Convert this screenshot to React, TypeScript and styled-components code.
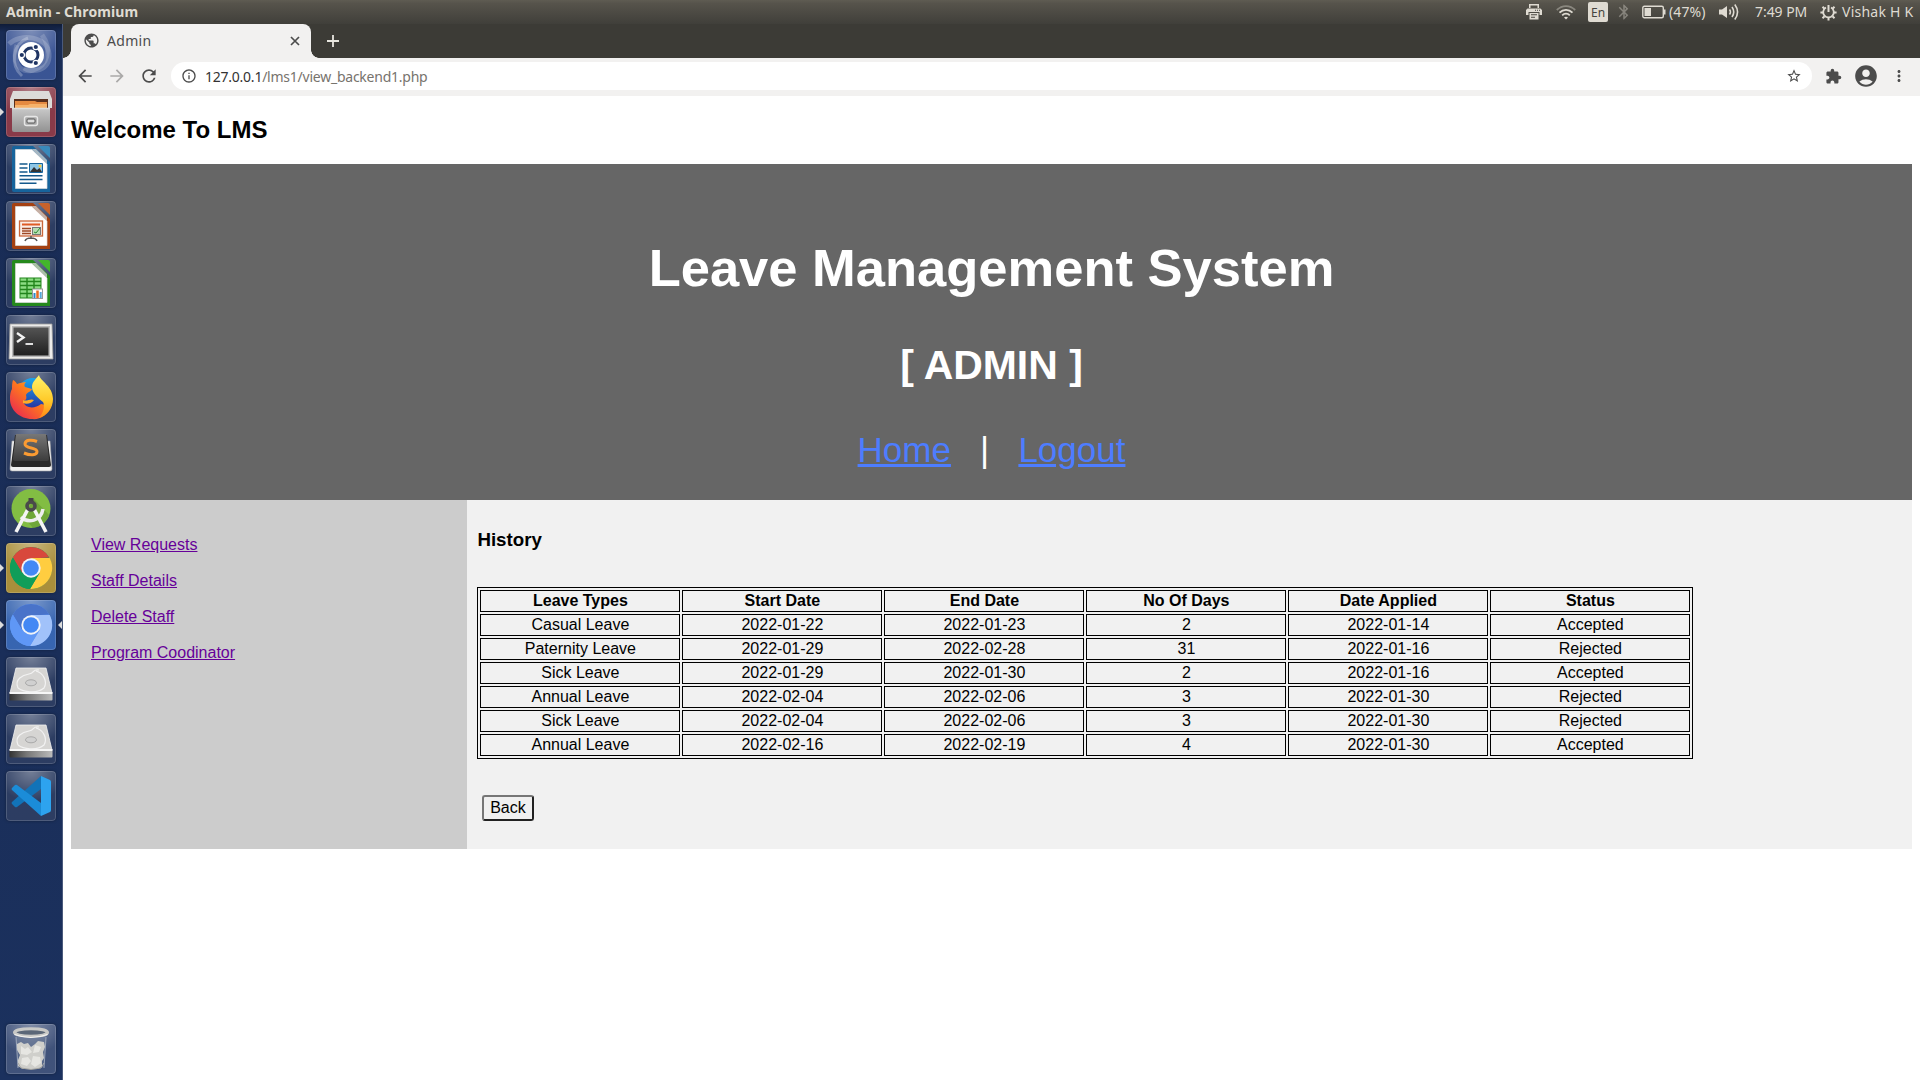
import React from "react";
import styled, { createGlobalStyle } from "styled-components";
import {
  MdPublic, MdArrowBack, MdArrowForward, MdRefresh, MdInfoOutline, MdStarBorder,
  MdExtension, MdAccountCircle, MdMoreVert, MdBluetooth,
} from "react-icons/md";

const Global = createGlobalStyle`
  html, body { margin: 0; padding: 0; background: #fff; }
  body { font-family: "Liberation Sans", Arial, sans-serif; font-size: 16px; color: #000; overflow: hidden; }
`;

const uiFont = `"Noto Sans", "Open Sans", sans-serif`;

const Desktop = styled.div`
  display: flex;
  flex-direction: column;
  width: 1920px;
  height: 1080px;
`;

/* ---------- Top panel ---------- */
const Panel = styled.header`
  display: flex;
  align-items: center;
  justify-content: space-between;
  height: 24px;
  flex: none;
  padding: 0 4px 0 6px;
  background: linear-gradient(#5f5c52 0, #56534b 15%, #403f3a 100%);
  color: #dfdbd2;
  font-family: ${uiFont};
  font-size: 14.5px;
  line-height: 24px;
  box-sizing: border-box;
`;
const PanelTitle = styled.div`
  font-weight: 700;
  font-size: 14px;
  letter-spacing: 0.1px;
`;
const Tray = styled.div`
  display: flex;
  align-items: center;
  height: 24px;
`;
const TrayItem = styled.div<{ $gap: number; $dim?: boolean }>`
  display: flex;
  align-items: center;
  margin-left: ${(p) => p.$gap}px;
  opacity: ${(p) => (p.$dim ? 0.4 : 1)};
  white-space: nowrap;
`;
const TrayText = styled.span<{ $w: number; $ls?: number }>`
  width: ${(p) => p.$w}px;
  font-size: 14px;
  letter-spacing: ${(p) => p.$ls ?? 0}px;
  white-space: nowrap;
`;
const Keyboard = styled.span`
  width: 20px;
  height: 20px;
  border-radius: 2px;
  background: #dfdbd2;
  color: #45433e;
  font-size: 12px;
  line-height: 21px;
  text-align: center;
`;

const Main = styled.div`
  display: flex;
  flex: 1;
  min-height: 0;
`;

/* ---------- Launcher ---------- */
const Launcher = styled.nav`
  display: flex;
  flex-direction: column;
  gap: 7px;
  width: 63px;
  flex: none;
  box-sizing: border-box;
  padding: 6px 6px 6px;
  border-right: 1px solid #4a5a7c;
  background: linear-gradient(#0f1c38 0, #192c55 8px, #1a2e59 60%, #1b315e 100%);
`;
const Tile = styled.div<{ $bg: string; $last?: boolean }>`
  position: relative;
  width: 50px;
  height: 50px;
  flex: none;
  box-sizing: border-box;
  border-radius: 4px;
  background: radial-gradient(ellipse 70% 60% at 50% 0, rgba(255, 255, 255, 0.36), rgba(255, 255, 255, 0.03)), ${(p) => p.$bg};
  box-shadow: inset 0 0 0 1px rgba(255, 255, 255, 0.16), 0 0 3px rgba(0, 0, 0, 0.35);
  margin-top: ${(p) => (p.$last ? "auto" : "0")};
  svg { display: block; }
`;
const Running = styled.i<{ $side: "left" | "right" }>`
  position: absolute;
  top: 21px;
  ${(p) => (p.$side === "left" ? "left: -6px;" : "right: -6px;")}
  width: 0;
  height: 0;
  border: 4px solid transparent;
  border-${(p) => p.$side}-color: #dcdcdc;
  border-${(p) => (p.$side === "left" ? "right" : "left")}-width: 0;
`;

/* ---------- Browser ---------- */
const Browser = styled.div`
  display: flex;
  flex-direction: column;
  flex: 1;
  min-width: 0;
`;
const TabStrip = styled.div`
  display: flex;
  align-items: stretch;
  height: 34px;
  padding-left: 8px;
  background: #3c3b36;
  font-family: ${uiFont};
`;
const Tab = styled.div`
  position: relative;
  display: flex;
  align-items: center;
  width: 240px;
  box-sizing: border-box;
  padding: 0 11px 1px 12px;
  border-radius: 8px 8px 0 0;
  background: #f2f1f0;
  color: #4c4c4c;
  font-size: 14px;
  &::before, &::after {
    content: "";
    position: absolute;
    bottom: 0;
    width: 8px;
    height: 8px;
  }
  &::before { left: -8px; background: radial-gradient(circle at 0 0, transparent 7.5px, #f2f1f0 8px); }
  &::after { right: -8px; background: radial-gradient(circle at 100% 0, transparent 7.5px, #f2f1f0 8px); }
`;
const TabTitle = styled.span`
  flex: 1;
  margin-left: 7px;
  letter-spacing: 0.3px;
`;
const NewTab = styled.div`
  display: flex;
  align-items: center;
  margin-left: 16px;
  color: #e8e6df;
`;
const Toolbar = styled.div`
  display: flex;
  align-items: center;
  height: 38px;
  box-sizing: border-box;
  padding: 0 12px 2px 12px;
  background: #f2f1f0;
  color: #4c4c4c;
  font-family: ${uiFont};
`;
const NavIcon = styled.span<{ $dim?: boolean }>`
  display: flex;
  width: 20px;
  margin-right: 12px;
  color: ${(p) => (p.$dim ? "#aaa9a8" : "#4c4c4c")};
`;
const AddressBar = styled.div`
  display: flex;
  align-items: center;
  flex: 1;
  height: 28px;
  margin: 0 13px 0 0;
  padding: 0 10px;
  border-radius: 14px;
  background: #fff;
`;
const Url = styled.span`
  flex: 1;
  margin-left: 8px;
  color: #77736d;
  font-size: 14px;
  letter-spacing: -0.24px;
  b { color: #333; font-weight: 400; }
`;
const Actions = styled.div`
  display: flex;
  align-items: center;
  gap: 11px;
`;

/* ---------- Page ---------- */
const Page = styled.main`
  flex: 1;
  padding: 20px 8px 0;
  background: #fff;
`;
const Welcome = styled.h2`
  margin: 0 0 20px;
  font-size: 24px;
  line-height: 28px;
`;
const Banner = styled.section`
  display: flex;
  flex-direction: column;
  align-items: center;
  height: 336px;
  box-sizing: border-box;
  padding-top: 74px;
  background: #666;
  color: #fff;
  font-size: 35px;
`;
const BannerTitle = styled.h2`
  margin: 0;
  font-size: 52.5px;
  line-height: 60px;
`;
const BannerRole = styled.h3`
  margin: 44px 0 41px;
  font-size: 40.95px;
  line-height: 47px;
`;
const BannerLinks = styled.div`
  line-height: 40px;
  white-space: pre;
  a { color: #4d7dff; text-decoration: underline; }
`;
const Columns = styled.div`
  display: flex;
  height: 349px;
`;
const Side = styled.aside`
  display: flex;
  flex-direction: column;
  align-items: flex-start;
  gap: 18px;
  width: 396px;
  box-sizing: border-box;
  padding: 36px 20px;
  background: #ccc;
  a { color: #660099; line-height: 18px; text-decoration: underline; }
`;
const Article = styled.article`
  flex: 1;
  padding: 29px 10px 0 10.4px;
  background: #f1f1f1;
`;
const Heading = styled.h3`
  margin: 0 0 37px;
  font-size: 18.72px;
  line-height: 21px;
`;
const Table = styled.table`
  width: 1216px;
  table-layout: fixed;
  border: 1px solid #000;
  border-collapse: separate;
  border-spacing: 2px;
  th, td {
    height: 18px;
    padding: 1px;
    border: 1px solid #000;
    line-height: 18px;
    text-align: center;
  }
`;
const BackButton = styled.button`
  display: block;
  margin: 36px 0 0 4.8px;
  padding: 2px 6px;
  height: 26px;
  border: 2px solid;
  border-color: #767676 #212121 #212121 #767676;
  border-radius: 3px;
  background: #f0f0f0;
  color: #000;
  font: 16px/18px "Liberation Sans", Arial, sans-serif;
`;

/* ---------- Launcher drawings, each on a 50x50 canvas ---------- */
const Svg = ({ children }: { children: React.ReactNode }) => (
  <svg width="50" height="50" viewBox="0 0 50 50">{children}</svg>
);

const Dash = () => (
  <Svg>
    <g fill="none" stroke="#fff">
      <path d="M3 14C14 3 42 6 43 24S25 43 18 38" strokeWidth="5" opacity=".2" />
      <path d="M36 5C46 18 42 36 27 40S6 30 11 15" strokeWidth="5" opacity=".17" />
      <path d="M16 46C4 35 6 14 22 8" strokeWidth="3" opacity=".25" />
    </g>
    <circle cx="25" cy="25" r="13" fill="#fff" />
    <circle cx="25" cy="25" r="7" fill="none" stroke="#1f3463" strokeWidth="3" />
    <g stroke="#fff" strokeWidth="1.2" fill="#1f3463">
      <circle cx="15.8" cy="25" r="2.7" /><circle cx="29.8" cy="17" r="2.7" /><circle cx="29.8" cy="33" r="2.7" />
    </g>
  </Svg>
);

const Files = () => (
  <Svg>
    <defs>
      <linearGradient id="fg" x2="0" y2="1"><stop stopColor="#c9c9c9" /><stop offset="1" stopColor="#929292" /></linearGradient>
    </defs>
    <path d="M7 4h36l3 8v9H4v-9z" fill="#dcdbd9" />
    <path d="M8 12h34v10H8z" fill="#5a2f1d" />
    <path d="M9 14h20l2 1h10v7H9z" fill="#e58a42" />
    <path d="M9 18h13l2-1h17v5H9z" fill="#f6b26b" />
    <path d="M6 21h38v22q0 2-2 2H8q-2 0-2-2z" fill="url(#fg)" />
    <path d="M6 21.500h38" stroke="#dedede" strokeWidth="1.5" />
    <rect x="18.5" y="29.5" width="13" height="9" rx="2" fill="#aaa" stroke="#e6e6e6" strokeWidth="1.4" />
    <rect x="21" y="32" width="8" height="4" rx="1" fill="#ddd" stroke="#555" />
  </Svg>
);

const Doc = ({ color, light, children }: { color: string; light: string; children: React.ReactNode }) => (
  <Svg>
    <path d="M8 2h19l17 16v30H8a2 2 0 0 1-2-2V4a2 2 0 0 1 2-2z" fill={color} />
    <path d="M9.5 5.5H26L41 20v24.5H9.5z" fill="#fff" stroke="#ddd" strokeWidth=".7" />
    <path d="M26 5l15 15v-4L30 5z" fill="#ccc" opacity=".8" />
    <path d="M32 2h10a2 2 0 0 1 2 2v10z" fill={light} />
    {children}
  </Svg>
);

const Writer = () => (
  <Doc color="#17649c" light="#3989bb">
    <path d="M13.5 20h8M13.5 24h8M13.5 28h8M13.5 31.7h23M13.5 35.500h23M13.5 39.3h17" stroke="#14598c" strokeWidth="1.6" />
    <path d="M23.5 19.500h13v9h-13z" fill="#8ec6e6" stroke="#17649c" />
    <path d="M24 28l4-5 3 3 2.500-2 2.500 4z" fill="#333" /><circle cx="34" cy="22" r="1.5" fill="#f6c83c" />
  </Doc>
);
const Impress = () => (
  <Doc color="#a54112" light="#c7622b">
    <rect x="13.5" y="20" width="23" height="15" fill="#fbeee7" stroke="#c9673b" strokeWidth="1.3" />
    <path d="M16 23.5h18" stroke="#df5b24" strokeWidth="2" />
    <path d="M16 27.5h9M16 30h9M16 32.5h9" stroke="#9f4824" strokeWidth="1.5" />
    <rect x="26.5" y="26.5" width="8" height="7" fill="#b7ddb2" stroke="#777" /><path d="M28 31l2 1 4-5" fill="none" stroke="#2b8a32" />
    <path d="M25 35v3m-6 2q1-3 6-3t6 3" fill="none" stroke="#555" strokeWidth="1.5" />
  </Doc>
);
const Calc = () => (
  <Doc color="#25891c" light="#43b62c">
    <rect x="14" y="20" width="21" height="20" fill="#8cdc83" stroke="#22851c" />
    <path d="M14 23.5h21M14 27.5h21M14 31.5h21M14 35.5h21M21 20v20M28 20v20" stroke="#22851c" strokeWidth="1.4" />
    <rect x="26.5" y="31" width="10" height="9.5" fill="#fff" stroke="#999" />
    <path d="M28.5 40v-5" stroke="#2a8ac9" strokeWidth="2" /><path d="M31.5 40v-7.5" stroke="#e76a21" strokeWidth="2.5" /><path d="M34.7 40v-6" stroke="#55a8db" strokeWidth="2" />
  </Doc>
);
const Terminal = () => (
  <Svg>
    <defs><linearGradient id="tg" x2="0" y2="1"><stop stopColor="#545454" /><stop offset="1" stopColor="#202020" /></linearGradient></defs>
    <path d="M4 9h42l1 35H3z" fill="#ecebea" stroke="#9c9c9c" strokeWidth=".8" />
    <path d="M6 11h38v31H6z" fill="#b8b8b8" />
    <path d="M7.5 12.5h35v28h-35z" fill="url(#tg)" />
    <path d="M11 18l6.500 4.500-6.500 4.500" fill="none" stroke="#f3f3f3" strokeWidth="2.400" />
    <path d="M19.5 29h7.5" stroke="#f3f3f3" strokeWidth="1.8" />
  </Svg>
);
const Firefox = () => (
  <Svg>
    <defs>
      <linearGradient id="ff" x1="1" x2="0" y2="1"><stop stopColor="#ffcf2e" /><stop offset=".45" stopColor="#ff7b1c" /><stop offset="1" stopColor="#e5195c" /></linearGradient>
      <linearGradient id="fb" x2="0" y2="1"><stop stopColor="#19a6ee" /><stop offset="1" stopColor="#2a2d9c" /></linearGradient>
      <linearGradient id="fy" x2="0" y2="1"><stop stopColor="#fff36a" /><stop offset=".6" stopColor="#ffc928" /><stop offset="1" stopColor="#ff8617" /></linearGradient>
    </defs>
    <circle cx="27" cy="22" r="16" fill="url(#fb)" />
    <path d="M7 8c2 1 3 2 4 4 3-1 6-2 9-2-2 2-2 4-1 5l7 2c-1 3-5 3-6 6 1 4 0 5-3 6 2 8 12 8 18 3l10 2c-4 9-11 14-19 13C14 47 4 38 4 27c0-6 1-8 2-10 0-3 0-6 1-9z" fill="url(#ff)" />
    <path d="M17 28c4 2 7-2 11 0-2 3-7 5-11 3z" fill="#ffab27" />
    <path d="M33 3c1 6 14 11 14 24 0 9-6 17-14 19 5-6 6-12 4-16-5-4-11-9-11-15 0-5 4-8 7-12z" fill="url(#fy)" />
  </Svg>
);
const Sublime = () => (
  <Svg>
    <defs><linearGradient id="sg" x2="0" y2="1"><stop stopColor="#777" /><stop offset="1" stopColor="#3c3c3c" /></linearGradient></defs>
    <path d="M6 12l-2 28q0 2 2 2h38q2 0 2-2l-2-28z" fill="#f2f2f2" stroke="#a8a8a8" strokeWidth=".6" />
    <path d="M9 6h32l4 30q0 2-2 2H7q-2 0-2-2z" fill="#292929" />
    <path d="M10 5h30l3 25q0 2-2 2H9q-2 0-2-2z" fill="url(#sg)" />
    <path d="M31 12.500c-5-2-12-2-12 2.500 0 5 12 3 12 7.500 0 4-7 4-13 1.500" fill="none" stroke="#fa9b32" strokeWidth="3" />
  </Svg>
);
const Android = () => (
  <Svg>
    <circle cx="25" cy="22.5" r="19.5" fill="#82bd43" />
    <path d="M28 13l15 16a20 20 0 0 1-16 13L17 30z" fill="#61962f" opacity=".55" />
    <path d="M15 31c7 7 20 4 22-8" fill="none" stroke="#eee" strokeWidth="3.5" />
    <path d="M22 23L10 46M28 23l12 23" stroke="#f5f5f5" strokeWidth="3.600" />
    <path d="M22.5 12h5v5h-5z" fill="#444" />
    <circle cx="25" cy="20" r="4" fill="none" stroke="#4a4a4a" strokeWidth="3.600" />
  </Svg>
);
const Chrome = ({ c }: { c: [string, string, string] }) => (
  <Svg>
    <circle cx="25" cy="25" r="21" fill={c[2]} />
    <path d="M6.8 14.5A21 21 0 0 1 43.2 14.5L25 15.5 16 30z" fill={c[0]} />
    <path d="M25 15h18.7A21 21 0 0 1 25 46l-1-.1 9.6-16z" fill={c[1]} />
    <path d="M6.8 14.5L16.5 30.5 33 31 24 46A21 21 0 0 1 6.8 14.5z" fill={c[2]} />
    <circle cx="25" cy="25" r="9.7" fill="#f1f4f8" />
    <circle cx="25" cy="25" r="7.8" fill="#4388f4" />
  </Svg>
);
const Disk = () => (
  <Svg>
    <defs><linearGradient id="dg" x2="1"><stop stopColor="#333" /><stop offset=".4" stopColor="#777" /><stop offset="1" stopColor="#bbb" /></linearGradient></defs>
    <path d="M10 11h30l6 25H4z" fill="#d6d5d3" stroke="#f2f2f2" strokeWidth=".8" />
    <path d="M3.5 36.5h43v6q0 1-1 1h-41q-1 0-1-1z" fill="url(#dg)" />
    <path d="M3.5 36h43" stroke="#f6f6f6" strokeWidth="1.8" />
    <path d="M12 31c-4-9 5-13 11-14s3-5 10-4M12 31c5 4 19 6 26 0 4-7-1-15-8-17" fill="none" stroke="#f2f2f2" strokeWidth="1.200" />
    <ellipse cx="25" cy="25.8" rx="5.5" ry="3" fill="#d0d0d0" stroke="#a9a9a9" />
  </Svg>
);
const Code = () => (
  <Svg>
    <path d="M35 5v13L11 36q-1 .7-2 0l-3-3q-1-1 0-2z" fill="#1273b8" />
    <path d="M35 45V32L11 14q-1-.7-2 0l-3 3q-1 1 0 2z" fill="#1b8cd8" />
    <path d="M35 5l9 4q1 .6 1 2v28q0 1.4-1 2l-9 4z" fill="#2da3ef" />
  </Svg>
);
const Trash = () => (
  <Svg>
    <path d="M10 11h30l-2 32q-13 5-26 0z" fill="#8a97ad" opacity=".3" />
    <path d="M11 20l4-2 3 2 4-1 3 4 4-3 3-3 6 1 1 5-2 5 1 6-2 3v6l-5 2H17l-5-3v-6l2-5-3-5z" fill="#cfcfcb" />
    <path d="M15 22l4 3 3-2 4 5-5 3-6-1zM29 21l6 2-2 5-6 1zM16 34l6-1 3 4-4 5-6-2zM27 32l7 1 1 6-6 4-4-3z" fill="#e6e6e2" />
    <path d="M12 39l3 5q10 3 20 0l3-5" fill="none" stroke="#a4a4a0" />
    <path d="M10 13l2 31M40 13l-2 31" stroke="#aeb7c6" strokeWidth=".8" />
    <ellipse cx="25" cy="8.5" rx="16.5" ry="3.7" fill="#5b6778" stroke="#c9c9c6" strokeWidth="3" />
    <path d="M8.5 10.5q16 6 33 0" fill="none" stroke="#f4f4f2" strokeWidth="1.2" />
  </Svg>
);

/* ---------- Tray and tab drawings ---------- */
const Printer = () => (
  <svg width="16" height="16" viewBox="0 0 16 16" fill="#dfdbd2">
    <path d="M3 0h10v4h-1.500V1.500h-7V4H3z" />
    <path d="M1.500 4.500h13L16 6v5h-2.500V8h-11v3H0V6z" />
    <path d="M3.500 9h9v6.500h-9zM5 10.300v1h6v-1zm0 2.400v1h4v-1z" fillRule="evenodd" />
    <path d="M9 5.800h1v1H9zM11 5.800h1v1h-1zM13 5.800h1v1h-1z" fill="#45433e" />
  </svg>
);
const Wifi = () => (
  <svg width="20" height="16" viewBox="0 0 20 16" fill="none" stroke="#dfdbd2" strokeWidth="1.8">
    <path d="M.8 6C6 .7 14 .7 19.2 6" opacity=".4" />
    <path d="M3.500 8.600c3.700-3.700 9.300-3.700 13 0M6.200 11.300c2.200-2.200 5.400-2.200 7.600 0" />
    <path d="M8 13.600q2-1.600 4 0l-2 2z" fill="#dfdbd2" stroke="none" />
  </svg>
);
const Battery = () => (
  <svg width="24" height="14" viewBox="0 0 24 14">
    <rect x=".8" y="1.3" width="20.5" height="11.4" rx="1.5" fill="none" stroke="#dfdbd2" strokeWidth="1.4" />
    <path d="M22 4.500h1.500v5H22z" fill="#dfdbd2" /><path d="M2.500 3H9v8H2.500z" fill="#dfdbd2" />
  </svg>
);
const Volume = () => (
  <svg width="21" height="18" viewBox="0 0 21 18" fill="none" stroke="#dfdbd2" strokeWidth="1.6">
    <path d="M0 6.500h3L8 3v12l-5-3.500H0z" fill="#dfdbd2" stroke="none" />
    <path d="M10.500 6.500q1.800 2.500 0 5M13 4q3.500 5 0 10M15.800 1.500q5.500 7.500 0 15" />
  </svg>
);
const Gear = () => (
  <svg width="17" height="17" viewBox="0 0 17 17" fill="none" stroke="#dfdbd2">
    <path d="M6 3.500a5.300 5.300 0 1 0 5 0" strokeWidth="1.8" />
    <path d="M8.500 1v7" strokeWidth="2" />
    <path d="M2.500 2.800l2 2M14.500 2.800l-2 2M.4 8.500h3M13.600 8.500h3M2.500 14.200l2-2M14.500 14.200l-2-2M8.500 13.500v3" strokeWidth="2" />
  </svg>
);
const Cross = () => (
  <svg width="10" height="10" viewBox="0 0 10 10" stroke="#4c4c4c" strokeWidth="1.7">
    <path d="M1 1l8 8M9 1l-8 8" />
  </svg>
);
const Plus = () => (
  <svg width="12" height="12" viewBox="0 0 12 12" stroke="#e8e6df" strokeWidth="1.8">
    <path d="M6 0v12M0 6h12" />
  </svg>
);

const plain = "#26375d";
const apps: { bg: string; icon: React.ReactNode; run?: boolean; focus?: boolean }[] = [
  { bg: "#344f91", icon: <Dash /> },
  { bg: "#853443", icon: <Files />, run: true },
  { bg: plain, icon: <Writer /> },
  { bg: plain, icon: <Impress /> },
  { bg: plain, icon: <Calc /> },
  { bg: plain, icon: <Terminal /> },
  { bg: plain, icon: <Firefox /> },
  { bg: plain, icon: <Sublime /> },
  { bg: plain, icon: <Android /> },
  { bg: "#a68b35", icon: <Chrome c={["#d8483c", "#ffcd40", "#109d59"]} />, run: true },
  { bg: "#3160ae", icon: <Chrome c={["#4973c9", "#a1c2fa", "#5f97f6"]} />, run: true, focus: true },
  { bg: plain, icon: <Disk /> },
  { bg: plain, icon: <Disk /> },
  { bg: plain, icon: <Code /> },
];

const columns = ["Leave Types", "Start Date", "End Date", "No Of Days", "Date Applied", "Status"];
const rows = [
  ["Casual Leave", "2022-01-22", "2022-01-23", "2", "2022-01-14", "Accepted"],
  ["Paternity Leave", "2022-01-29", "2022-02-28", "31", "2022-01-16", "Rejected"],
  ["Sick Leave", "2022-01-29", "2022-01-30", "2", "2022-01-16", "Accepted"],
  ["Annual Leave", "2022-02-04", "2022-02-06", "3", "2022-01-30", "Rejected"],
  ["Sick Leave", "2022-02-04", "2022-02-06", "3", "2022-01-30", "Rejected"],
  ["Annual Leave", "2022-02-16", "2022-02-19", "4", "2022-01-30", "Accepted"],
];
const links = ["View Requests", "Staff Details", "Delete Staff", "Program Coodinator"];

export default function App() {
  return (
    <Desktop>
      <Global />
      <Panel>
        <PanelTitle>Admin - Chromium</PanelTitle>
        <Tray>
          <TrayItem $gap={0}><Printer /></TrayItem>
          <TrayItem $gap={14}><Wifi /></TrayItem>
          <TrayItem $gap={12}><Keyboard>En</Keyboard></TrayItem>
          <TrayItem $gap={7} $dim><MdBluetooth size={18} /></TrayItem>
          <TrayItem $gap={9}><Battery /></TrayItem>
          <TrayItem $gap={3}><TrayText $w={38} $ls={0.1}>(47%)</TrayText></TrayItem>
          <TrayItem $gap={12}><Volume /></TrayItem>
          <TrayItem $gap={15}><TrayText $w={53} $ls={-0.05}>7:49 PM</TrayText></TrayItem>
          <TrayItem $gap={12}><Gear /></TrayItem>
          <TrayItem $gap={5}><TrayText $w={74} $ls={0.25}>Vishak H K</TrayText></TrayItem>
        </Tray>
      </Panel>
      <Main>
        <Launcher>
          {apps.map((a, i) => (
            <Tile key={i} $bg={a.bg}>
              {a.icon}
              {a.run && <Running $side="left" />}
              {a.focus && <Running $side="right" />}
            </Tile>
          ))}
          <Tile $bg="#3a4d76" $last><Trash /></Tile>
        </Launcher>
        <Browser>
          <TabStrip>
            <Tab>
              <MdPublic size={17} />
              <TabTitle>Admin</TabTitle>
              <Cross />
            </Tab>
            <NewTab><Plus /></NewTab>
          </TabStrip>
          <Toolbar>
            <NavIcon><MdArrowBack size={20} /></NavIcon>
            <NavIcon $dim><MdArrowForward size={20} /></NavIcon>
            <NavIcon><MdRefresh size={20} /></NavIcon>
            <AddressBar>
              <MdInfoOutline size={16} />
              <Url><b>127.0.0.1</b>/lms1/view_backend1.php</Url>
              <MdStarBorder size={16} />
            </AddressBar>
            <Actions>
              <MdExtension size={17} />
              <MdAccountCircle size={26} />
              <MdMoreVert size={18} />
            </Actions>
          </Toolbar>
          <Page>
            <Welcome>Welcome To LMS</Welcome>
            <Banner>
              <BannerTitle>Leave Management System</BannerTitle>
              <BannerRole>[ ADMIN ]</BannerRole>
              <BannerLinks>
                <a>Home</a>{"\u00a0\u00a0\u00a0|\u00a0\u00a0\u00a0"}<a>Logout</a>
              </BannerLinks>
            </Banner>
            <Columns>
              <Side>{links.map((l) => <a key={l}>{l}</a>)}</Side>
              <Article>
                <Heading>History</Heading>
                <Table>
                  <thead>
                    <tr>{columns.map((c) => <th key={c}>{c}</th>)}</tr>
                  </thead>
                  <tbody>
                    {rows.map((r, i) => (
                      <tr key={i}>{r.map((v, j) => <td key={j}>{v}</td>)}</tr>
                    ))}
                  </tbody>
                </Table>
                <BackButton>Back</BackButton>
              </Article>
            </Columns>
          </Page>
        </Browser>
      </Main>
    </Desktop>
  );
}
